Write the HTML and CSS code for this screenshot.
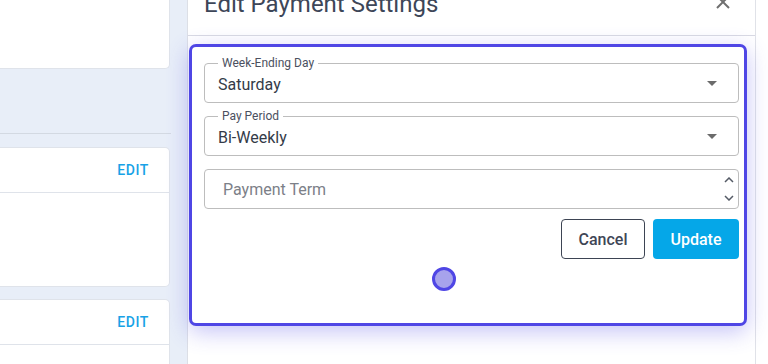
FILE: index.html
```html
<!DOCTYPE html>
<html>
<head>
    <link rel="stylesheet" href="styles.css">
</head>
<body>
    <div class="page">
        <div class="side">
            <div class="card card-top"></div>
            <div class="section-gap"></div>
            <div class="card card-main">
                <div class="card-header">
                    <span class="edit-link">EDIT</span>
                </div>
            </div>
            <div class="card card-main">
                <div class="card-header">
                    <span class="edit-link">EDIT</span>
                </div>
            </div>
        </div>

        <div class="drawer">
            <div class="drawer-header">
                <h2 class="drawer-title">Edit Payment Settings</h2>
                <svg class="close-icon" width="14" height="14" viewBox="0 0 14 14">
                    <path d="M1 1 L13 13 M13 1 L1 13" stroke="#6f6f6f" stroke-width="2" fill="none"/>
                </svg>
            </div>
            <div class="drawer-body">
                <form class="settings-form" id="paymentForm">
                    <div class="field">
                        <span class="field-label">Week-Ending Day</span>
                        <span class="field-value">Saturday</span>
                        <span class="caret"></span>
                    </div>
                    <div class="field">
                        <span class="field-label">Pay Period</span>
                        <span class="field-value">Bi-Weekly</span>
                        <span class="caret"></span>
                    </div>
                    <div class="field field-number">
                        <span class="field-placeholder">Payment Term</span>
                        <span class="spinner">
                            <svg width="10" height="6" viewBox="0 0 10 6">
                                <path d="M1 5 L5 1 L9 5" stroke="#555b66" stroke-width="1.5" fill="none"/>
                            </svg>
                            <svg width="10" height="6" viewBox="0 0 10 6">
                                <path d="M1 1 L5 5 L9 1" stroke="#555b66" stroke-width="1.5" fill="none"/>
                            </svg>
                        </span>
                    </div>
                    <div class="form-actions">
                        <button type="button" class="btn btn-cancel">Cancel</button>
                        <button type="submit" class="btn btn-update">Update</button>
                    </div>
                    <div class="loader-row">
                        <span class="loader-dot"></span>
                    </div>
                </form>
            </div>
        </div>
        <div class="edge"></div>
    </div>
</body>
</html>
```

FILE: styles.css
```css
body {
    margin: 0;
    font-family: Roboto, "Liberation Sans", Arial, sans-serif;
    background: #ffffff;
}
.page {
    display: flex;
    height: 364px;
    overflow: hidden;
}
.side {
    width: 171px;
    padding-right: 16px;
    background: #e8eef8;
    flex-shrink: 0;
}
.card {
    width: 170px;
    background: #ffffff;
    border: 1px solid #dfe3ea;
    border-left: none;
    border-radius: 0 5px 5px 0;
    box-sizing: border-box;
}
.card-top {
    height: 69px;
    border-top: none;
    border-radius: 0 0 5px 0;
}
.section-gap {
    height: 64px;
    border-bottom: 1px solid #d3d9e2;
    margin-bottom: 13px;
    width: 171px;
}
.card-main {
    height: 140px;
    margin-bottom: 12px;
}
.card-header {
    height: 44px;
    border-bottom: 1px solid #dfe3ea;
    display: flex;
    align-items: center;
    justify-content: flex-end;
    padding-right: 20px;
}
.edit-link {
    font-size: 14px;
    font-weight: 500;
    color: #18a2e6;
    letter-spacing: 0.6px;
}
.drawer {
    width: 569px;
    flex-shrink: 0;
    background: #ffffff;
    border-left: 1px solid #dcdfe6;
    border-right: 1px solid #e0e2e8;
    box-sizing: border-box;
}
.edge {
    flex: 1;
    background: #ffffff;
}
.drawer-header {
    height: 35px;
    border-bottom: 1px solid #d9dae3;
    display: flex;
    justify-content: space-between;
    align-items: flex-start;
    padding: 0 25px 0 16px;
}
.drawer-title {
    margin: -8px 0 0 0;
    font-size: 24px;
    line-height: 24px;
    font-weight: 400;
    color: #3d4658;
}
.close-icon {
    margin-top: -5px;
}
.drawer-body {
    padding: 8px 0 0 1px;
}
.settings-form {
    position: relative;
    width: 558px;
    box-sizing: border-box;
    border: 3px solid #4f46e5;
    border-radius: 7px;
    padding: 16px 5px 32px 12px;
    box-shadow: 0 6px 22px rgba(79, 70, 229, 0.32);
    background: #ffffff;
}
.field {
    position: relative;
    height: 40px;
    box-sizing: border-box;
    border: 1px solid #bdbdbd;
    border-radius: 4px;
    display: flex;
    align-items: center;
    padding: 0 13px;
    margin-bottom: 13px;
}
.field-label {
    position: absolute;
    left: 13px;
    top: -8px;
    padding: 0 4px;
    background: #ffffff;
    font-size: 12px;
    line-height: 14px;
    color: #4b5060;
}
.field-value {
    flex: 1;
    font-size: 16px;
    color: #343b48;
    margin-top: 2px;
}
.caret {
    width: 0;
    height: 0;
    border-left: 5px solid transparent;
    border-right: 5px solid transparent;
    border-top: 5px solid #6b6b6b;
    margin-right: 8px;
}
.field-number {
    margin-bottom: 10px;
    padding-left: 18px;
    padding-right: 4px;
}
.field-placeholder {
    flex: 1;
    font-size: 16px;
    color: #7c8088;
}
.spinner {
    display: flex;
    flex-direction: column;
    justify-content: space-between;
    height: 24px;
}
.spinner svg {
    display: block;
}
.form-actions {
    display: flex;
    justify-content: flex-end;
    gap: 8px;
}
.btn {
    height: 40px;
    border-radius: 4px;
    font-family: Roboto, "Liberation Sans", Arial, sans-serif;
    font-size: 16px;
    font-weight: 500;
    cursor: pointer;
}
.btn-cancel {
    width: 84px;
    background: #ffffff;
    border: 1px solid #3d4453;
    color: #3f4656;
}
.btn-update {
    width: 86px;
    background: #05a7e8;
    border: none;
    color: #ffffff;
}
.loader-row {
    margin-top: 8px;
    padding-left: 228px;
    height: 24px;
}
.loader-dot {
    display: block;
    width: 24px;
    height: 24px;
    box-sizing: border-box;
    border-radius: 50%;
    border: 3px solid #4f46e5;
    background: #a7a3ec;
}
```
